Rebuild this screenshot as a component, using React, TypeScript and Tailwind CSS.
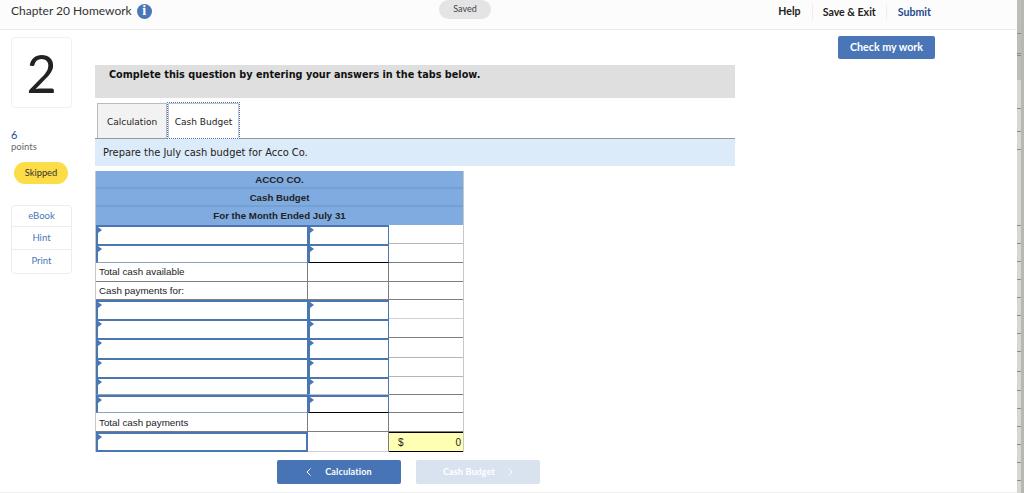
import React from "react";

const sans = "font-['Lato','Noto_Sans',sans-serif]";
const verdana = "font-['DejaVu_Sans',sans-serif]";
const arial = "font-['Liberation_Sans',Arial,sans-serif]";

type Row = {
  kind: "input" | "label" | "last";
  text?: string;
  h: number;
  line?: string;
  b1?: string;
  b2?: string;
  nudge?: string;
};

const rows: Row[] = [
  { kind: "input", h: 19, line: "border-[#b5b5b5]" },
  { kind: "input", h: 19, line: "border-[#7d7d7d]", b1: "border-b border-b-[#8fa3bd]", b2: "border-b border-b-black" },
  { kind: "label", text: "Total cash available", h: 19, line: "border-[#7d7d7d]" },
  { kind: "label", text: "Cash payments for:", h: 18, line: "border-[#7d7d7d]", nudge: "pt-[2px]" },
  { kind: "input", h: 19, line: "border-[#d0d0d0]" },
  { kind: "input", h: 19, line: "border-[#7d7d7d]" },
  { kind: "input", h: 20, line: "border-[#b5b5b5]" },
  { kind: "input", h: 19, line: "border-[#b5b5b5]" },
  { kind: "input", h: 18, line: "border-[#7d7d7d]", b1: "border-b border-b-[#8fa3bd]", b2: "border-b border-b-[#b5c2d4]" },
  { kind: "input", h: 18, line: "border-[#7d7d7d]", b1: "border-b border-b-[#8fa3bd]", b2: "border-b border-b-black" },
  { kind: "label", text: "Total cash payments", h: 19, line: "border-[#7d7d7d]", nudge: "pt-[3px]" },
  { kind: "last", h: 20 },
];

const ticks = [33, 53, 55, 108, 131, 149, 225, 243, 261, 279, 297, 315, 333, 351, 371, 390, 408, 426, 444, 462, 480];

function Marker() {
  return <span className="absolute left-0 top-0 h-0 w-0 border-y-[3px] border-l-[4px] border-y-transparent border-l-[#4a76b8]" />;
}

function InputCell({ w, extra }: { w: string; extra?: string }) {
  return (
    <div className={`relative h-full ${w} shrink-0 border-l-2 border-r border-t-2 border-[#4a76b2] bg-white ${extra ?? ""}`}>
      <Marker />
    </div>
  );
}

function BudgetRow({ row }: { row: Row }) {
  const h = row.h === 18 ? "h-[18px]" : row.h === 20 ? "h-[20px]" : "h-[19px]";
  if (row.kind === "label") {
    return (
      <div className={`flex ${h} border-b ${row.line}`}>
        <div className={`flex h-full w-[212px] shrink-0 items-center border-r border-[#7d7d7d] pl-[3px] text-[9.8px] text-[#222] ${row.nudge ?? ""} ${arial}`}>
          {row.text}
        </div>
        <div className="h-full w-[81px] shrink-0 border-r border-[#7d7d7d]" />
        <div className="h-full flex-1" />
      </div>
    );
  }
  if (row.kind === "last") {
    return (
      <div className={`flex ${h}`}>
        <InputCell w="w-[212px]" extra="border-b-2 border-r-2" />
        <div className="h-full w-[81px] shrink-0 border-b border-r border-[#7d7d7d] border-b-[#d0d0d0]" />
        <div className={`flex h-full flex-1 items-center justify-between border-y border-black bg-[#ffffb3] pl-[9px] pr-[2px] text-[10px] text-[#222] ${arial}`}>
          <span>$</span>
          <span>0</span>
        </div>
      </div>
    );
  }
  return (
    <div className={`flex ${h}`}>
      <InputCell w="w-[212px]" extra={row.b1} />
      <InputCell w="w-[81px]" extra={row.b2} />
      <div className={`h-full flex-1 border-b ${row.line}`} />
    </div>
  );
}

function SideLink({ label, divider, cls }: { label: string; divider?: boolean; cls: string }) {
  return (
    <div className={`flex ${cls} items-center justify-center text-[9.5px] text-[#4a76b8] ${divider ? "border-b border-[#ececec]" : ""}`}>
      {label}
    </div>
  );
}

export default function App() {
  return (
    <div className={`relative h-[493px] w-[1024px] overflow-hidden bg-white ${sans}`}>
      <header className="flex h-[30px] items-center border-b border-[#ececec] bg-[#fcfcfc]">
        <div className="flex w-[439px] shrink-0 items-center pb-[7px] pl-[11px]">
          <span className="text-[12px] text-[#333]">Chapter 20 Homework</span>
          <span className="ml-[5px] flex h-[15px] w-[15px] items-center justify-center rounded-full bg-[#4a76b8] font-['Liberation_Serif',serif] text-[14px] font-bold leading-none text-white">
            i
          </span>
        </div>
        <div className="mb-[10px] flex h-[19px] w-[52px] items-center justify-center rounded-full bg-[#e4e4e6] pb-[2px] text-[9px] text-[#444]">
          Saved
        </div>
        <nav className="ml-auto mr-[93px] flex items-center pb-[5px] text-[10.6px] font-bold">
          <span className="pr-[11px] text-[#222]">Help</span>
          <span className="border-l border-[#eee] px-[10px] leading-[16px] text-[#222]">Save &amp; Exit</span>
          <span className="border-l border-[#eee] pl-[11px] leading-[16px] text-[#1f4a8c]">Submit</span>
        </nav>
      </header>

      <div className="flex">
        <aside className="flex w-[95px] shrink-0 flex-col pl-[11px] pt-[7px]">
          <div className="flex h-[71px] w-[61px] items-center justify-center rounded-[4px] border border-[#f0f0f0] text-[52px] leading-none text-[#222]">
            2
          </div>
          <div className="mt-[20px] text-[11px] leading-[14px] text-[#1f4a8c]">6</div>
          <div className="-mt-[1px] text-[9.5px] leading-[12px] text-[#666]">points</div>
          <div className="ml-[3px] mt-[9px] flex h-[22px] w-[54px] items-center justify-center rounded-full bg-[#fcdc47] text-[9.3px] text-[#333]">
            Skipped
          </div>
          <div className="mt-[21px] w-[61px] rounded-[4px] border border-[#ececec] pb-[1px]">
            <SideLink label="eBook" divider cls="h-[21px]" />
            <SideLink label="Hint" divider cls="h-[23px]" />
            <SideLink label="Print" cls="h-[22px]" />
          </div>
        </aside>

        <main className="relative w-[640px] shrink-0 pt-[35px]">
          <div className={`h-[33px] w-[640px] bg-[#dfdfdf] pl-[14px] pt-[3px] text-[9.7px] font-bold leading-[14px] text-[#111] ${verdana}`}>
            Complete this question by entering your answers in the tabs below.
          </div>
          <div className={`ml-[2px] mt-[5px] flex h-[35px] w-[638px] items-stretch ${verdana}`}>
            <div className="flex w-[70px] items-center justify-center border border-b-0 border-[#bbb] bg-[#f2f2f2] pt-[3px] text-[9px] text-[#222]">
              Calculation
            </div>
            <div className="-my-[1px] w-[73px] border border-dotted border-[#3f74c8] bg-white">
              <div className="flex h-full items-center justify-center border border-b-0 border-[#c4c4c4] pt-[3px] text-[9.05px] text-[#222]">
                Cash Budget
              </div>
            </div>
          </div>
          <div className={`flex h-[28px] items-center border-t border-[#999] bg-[#dcebf9] pl-[8px] pt-[2px] text-[9.9px] text-[#222] ${verdana}`}>
            Prepare the July cash budget for Acco Co.
          </div>

          <div className="mt-[5px] w-[369px] border-x border-[#c8c8c8]">
            <div className={`bg-[#7fabe0] text-center text-[9.7px] font-bold text-[#222] ${arial}`}>
              <div className="h-[18px] border-b-2 border-[#75a0d2] leading-[17px]">ACCO CO.</div>
              <div className="h-[18px] border-b-2 border-[#75a0d2] leading-[17px]">Cash Budget</div>
              <div className="h-[18px] leading-[18px]">For the Month Ended July 31</div>
            </div>
            {rows.map((row, i) => (
              <BudgetRow key={i} row={row} />
            ))}
          </div>

          <div className="ml-[182px] mt-[8px] flex gap-[15px]">
            <div className="flex h-[24px] w-[124px] items-center justify-center gap-[13px] rounded-[2px] bg-[#4674b4] text-[9px] font-bold tracking-[0.15px] text-white">
              <svg width="6" height="8" viewBox="0 0 6 8" fill="none" stroke="white" strokeWidth="1">
                <path d="M4.5 0.5 L1 4 L4.5 7.5" />
              </svg>
              <span>Calculation</span>
            </div>
            <div className="flex h-[24px] w-[124px] items-center justify-center gap-[12px] rounded-[2px] bg-[#d9e3ef] text-[9px] font-bold tracking-[0.15px] text-white">
              <span>Cash Budget</span>
              <svg width="6" height="8" viewBox="0 0 6 8" fill="none" stroke="white" strokeWidth="1">
                <path d="M1.5 0.5 L5 4 L1.5 7.5" />
              </svg>
            </div>
          </div>
        </main>

        <div className="ml-[103px] pt-[6px]">
          <div className="flex h-[23px] w-[97px] items-center justify-center rounded-[2px] bg-[#4a76b8] text-[10.7px] font-bold text-white">
            Check my work
          </div>
        </div>
      </div>

      <div className="absolute bottom-0 left-0 right-0 h-px bg-[#eeeeee]" />
      <div className="absolute bottom-0 right-0 top-0 flex w-[7px]">
        <div className="flex w-[4px] flex-col">
          <div className="h-[80px] bg-[#bdbdbd]" />
          <div className="flex-1 bg-[#d6d6d6]" />
        </div>
        <div className="w-[3px] bg-[#b8b8b2]" />
        {ticks.map((t) => (
          <div key={t} className="absolute left-0 h-px w-[4px] bg-[#8c8c8c]" style={{ top: t }} />
        ))}
      </div>
    </div>
  );
}
